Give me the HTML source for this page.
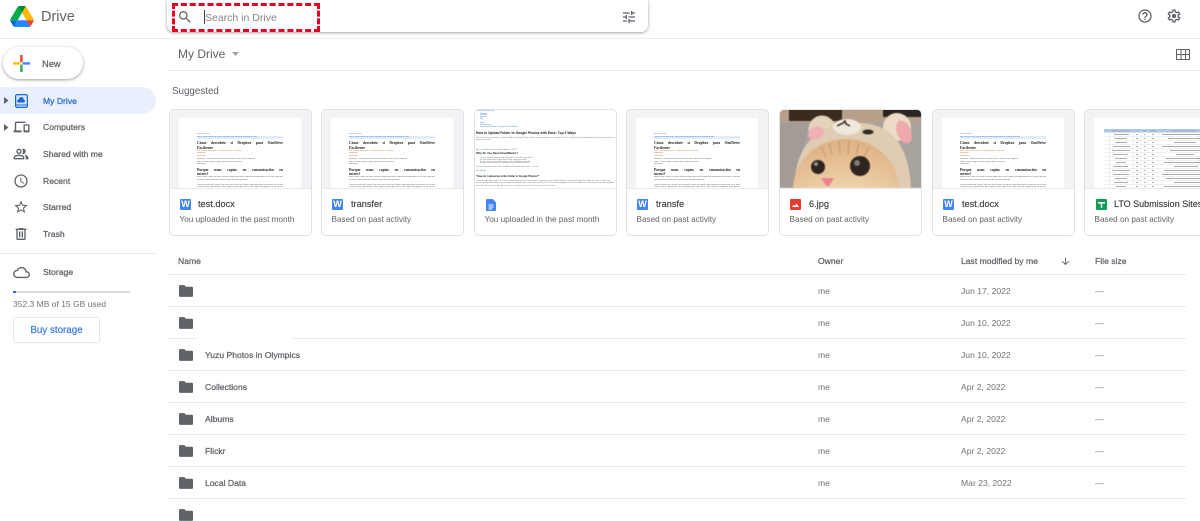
<!DOCTYPE html>
<html lang="en"><head><meta charset="utf-8"><title>My Drive - Google Drive</title>
<style>
html,body{margin:0;padding:0;background:#fff}
body{width:1200px;height:511px;position:relative;overflow:hidden;font-family:"Liberation Sans",sans-serif;color:#5f6368;font-size:9px;filter:blur(.25px)}
.a{position:absolute;white-space:nowrap}
svg{position:absolute;display:block}
.hl{position:absolute;height:1px;background:#e8eaed}
.nav{position:absolute;left:43px;font-size:8.6px;line-height:12px;color:#5f6368;-webkit-text-stroke:.25px #5f6368;white-space:nowrap}
.card{position:absolute;top:109px;width:141px;height:125px;border:1px solid #dfe1e5;border-radius:5px;background:#f1f3f4;overflow:hidden}
.info{position:absolute;left:0;right:0;top:78px;bottom:0;background:#fff;border-top:1px solid #e8eaed}
.fn{position:absolute;left:29px;top:9px;font-size:9.2px;line-height:13px;color:#3c4043;-webkit-text-stroke:.15px #3c4043;white-space:nowrap}
.sub{position:absolute;left:9.5px;top:25px;font-size:8.2px;line-height:12px;color:#5f6368;white-space:nowrap}
.ic{position:absolute;left:10px;top:10px;width:11px;height:11px;border-radius:1px;background:#4285f4;color:#fff;font-size:9px;line-height:11px;text-align:center;font-weight:bold}
.sheet{position:absolute;left:9px;top:8px;width:122px;height:71px;background:#fff;overflow:hidden;filter:blur(.2px)}
.sheet div{position:absolute;left:18px;width:86px;white-space:nowrap;overflow:hidden}
.t{font:2.1px/3px "Liberation Sans",sans-serif;color:#666}
.sheet div.h{font:bold 3.7px/4.5px "Liberation Serif",serif;color:#222;white-space:normal;text-align:justify;text-align-last:justify;height:4.5px}
.sheet div.h2{font:bold 3.7px/4.5px "Liberation Serif",serif;color:#222}
.o{font:2.1px/3px "Liberation Sans",sans-serif;color:#d5733b}
.fld{position:absolute;left:179px;width:14px;height:12px}
.nm{position:absolute;left:205px;font-size:8.6px;line-height:12px;color:#5f6368;-webkit-text-stroke:.25px #5f6368;white-space:nowrap}
.ow{position:absolute;left:818px;font-size:8.6px;line-height:12px;color:#6f7378}
.dt{position:absolute;left:961px;font-size:8.6px;line-height:12px;color:#6f7378}
.sz{position:absolute;left:1095px;font-size:9px;line-height:12px;color:#80868b}
.th{position:absolute;top:255px;font-size:8.6px;line-height:12px;color:#5f6368;-webkit-text-stroke:.25px #5f6368;white-space:nowrap}
</style></head><body>

<!-- Logo -->
<svg style="left:10px;top:6px" width="24" height="21" viewBox="0 0 87.3 78"><path d="m6.6 66.85 3.85 6.65c.8 1.4 1.95 2.5 3.3 3.3l13.75-23.8h-27.5c0 1.55.4 3.1 1.2 4.5z" fill="#0066da"/><path d="m43.65 25-13.75-23.8c-1.35.8-2.5 1.9-3.3 3.3l-25.4 44a9.06 9.06 0 0 0 -1.2 4.5h27.5z" fill="#00ac47"/><path d="m73.55 76.8c1.35-.8 2.5-1.9 3.3-3.3l1.6-2.75 7.65-13.25c.8-1.4 1.2-2.95 1.2-4.5h-27.502l5.852 11.5z" fill="#ea4335"/><path d="m43.65 25 13.75-23.8c-1.35-.8-2.9-1.2-4.5-1.2h-18.5c-1.6 0-3.15.45-4.5 1.2z" fill="#00832d"/><path d="m59.8 53h-32.3l-13.75 23.8c1.35.8 2.9 1.2 4.5 1.2h50.8c1.6 0 3.15-.45 4.5-1.2z" fill="#2684fc"/><path d="m73.4 26.5-12.7-22c-.8-1.4-1.95-2.5-3.3-3.3l-13.75 23.8 16.15 28h27.45c0-1.55-.4-3.1-1.2-4.5z" fill="#ffba00"/></svg>
<div class="a" style="left:41px;top:8px;font-size:14.5px;line-height:18px;color:#5f6368">Drive</div>

<!-- Search -->
<div class="a" style="left:167px;top:0;width:481px;height:32px;background:#fff;border-radius:0 0 7px 7px;box-shadow:0 1px 2px rgba(60,64,67,.3),0 1px 3px 1px rgba(60,64,67,.15)"></div>
<svg style="left:177px;top:9px" width="16" height="16" viewBox="0 0 24 24" fill="#5f6368"><path d="M15.5 14h-.79l-.28-.27A6.471 6.471 0 0 0 16 9.5 6.5 6.5 0 1 0 9.5 16c1.61 0 3.09-.59 4.23-1.57l.27.28v.79l5 4.99L20.49 19l-4.99-5zm-6 0C7.01 14 5 11.99 5 9.5S7.01 5 9.5 5 14 7.01 14 9.5 11.99 14 9.5 14z"/></svg>
<div class="a" style="left:204px;top:10px;width:1px;height:14px;background:#3c4043"></div>
<div class="a" style="left:205px;top:11px;font-size:10.5px;line-height:14px;color:#80868b">Search in Drive</div>
<svg style="left:621px;top:9px" width="16" height="16" viewBox="0 0 24 24" fill="#5f6368"><path d="M3 17v2h6v-2H3zM3 5v2h10V5H3zm10 16v-2h8v-2h-8v-2h-2v6h2zM7 9v2H3v2h4v2h2V9H7zm14 4v-2H11v2h10zm-6-4h2V7h4V5h-4V3h-2v6z"/></svg>
<div class="a" style="left:172px;top:3px;width:142px;height:23px;border:3px dashed #e60023"></div>

<svg style="left:1137px;top:8px" width="16" height="16" viewBox="0 0 24 24" fill="#5f6368"><path d="M11 18h2v-2h-2v2zm1-16C6.48 2 2 6.48 2 12s4.48 10 10 10 10-4.48 10-10S17.52 2 12 2zm0 18c-4.41 0-8-3.59-8-8s3.59-8 8-8 8 3.59 8 8-3.59 8-8 8zm0-14c-2.21 0-4 1.79-4 4h2c0-1.1.9-2 2-2s2 .9 2 2c0 2-3 1.75-3 5h2c0-2.25 3-2.5 3-5 0-2.21-1.79-4-4-4z"/></svg>
<svg style="left:1166px;top:8px" width="16" height="16" viewBox="0 0 24 24" fill="#5f6368"><path d="M19.43 12.98c.04-.32.07-.64.07-.98 0-.34-.03-.66-.07-.98l2.11-1.65c.19-.15.24-.42.12-.64l-2-3.46c-.09-.16-.26-.25-.44-.25-.06 0-.12.01-.17.03l-2.49 1c-.52-.4-1.08-.73-1.69-.98l-.38-2.65C14.46 2.18 14.25 2 14 2h-4c-.25 0-.46.18-.49.42l-.38 2.65c-.61.25-1.17.59-1.69.98l-2.49-1c-.06-.02-.12-.03-.18-.03-.17 0-.34.09-.43.25l-2 3.46c-.13.22-.07.49.12.64l2.11 1.65c-.04.32-.07.65-.07.98 0 .33.03.66.07.98l-2.11 1.65c-.19.15-.24.42-.12.64l2 3.46c.09.16.26.25.44.25.06 0 .12-.01.17-.03l2.49-1c.52.4 1.08.73 1.69.98l.38 2.65c.03.24.24.42.49.42h4c.25 0 .46-.18.49-.42l.38-2.65c.61-.25 1.17-.59 1.69-.98l2.49 1c.06.02.12.03.18.03.17 0 .34-.09.43-.25l2-3.46c.12-.22.07-.49-.12-.64l-2.11-1.65zm-1.98-1.71c.04.31.05.52.05.73 0 .21-.02.43-.05.73l-.14 1.13.89.7 1.08.84-.7 1.21-1.27-.51-1.04-.42-.9.68c-.43.32-.84.56-1.25.73l-1.06.43-.16 1.13-.2 1.35h-1.4l-.19-1.35-.16-1.13-1.06-.43c-.43-.18-.83-.41-1.23-.71l-.91-.7-1.06.43-1.27.51-.7-1.21 1.08-.84.89-.7-.14-1.13c-.03-.31-.05-.54-.05-.74s.02-.43.05-.73l.14-1.13-.89-.7-1.08-.84.7-1.21 1.27.51 1.04.42.9-.68c.43-.32.84-.56 1.25-.73l1.06-.43.16-1.13.2-1.35h1.39l.19 1.35.16 1.13 1.06.43c.43.18.83.41 1.23.71l.91.7 1.06-.43 1.27-.51.7 1.21-1.07.85-.89.7.14 1.13z"/><circle cx="12" cy="12" r="3.2"/></svg>

<div class="hl" style="left:0;top:38px;width:1200px"></div>

<!-- Sidebar -->
<div class="a" style="left:3px;top:47px;width:80px;height:32px;border-radius:16px;background:#fff;box-shadow:0 1px 2px rgba(60,64,67,.3),0 1px 3px 1px rgba(60,64,67,.15)"></div>
<svg style="left:13px;top:55px" width="17" height="17" viewBox="0 0 17 17"><path d="M9.6 0H7.200v7.200h2.400z" fill="#ea4335"/><path d="M9.600 9.600H7.200V17h2.400z" fill="#34a853"/><path d="M0 7.200h7.200v2.400H0z" fill="#fbbc04"/><path d="M9.600 7.200H17v2.400H9.600z" fill="#4285f4"/></svg>
<div class="a" style="left:42px;top:58px;font-size:9.300px;line-height:12px;color:#5f6368;-webkit-text-stroke:.25px #5f6368">New</div>

<div class="a" style="left:0;top:87px;width:156px;height:27px;background:#e8f0fe;border-radius:0 14px 14px 0"></div>
<svg style="left:4px;top:97px" width="5" height="7" viewBox="0 0 5 7"><path d="M0 0l4.500 3.500L0 7z" fill="#5f6368"/></svg>
<svg style="left:15px;top:94px" width="13" height="14" viewBox="0 0 13 14"><rect x=".6" y=".6" width="11.800" height="12.800" rx="1.500" fill="#d6e4fb" stroke="#1967d2" stroke-width="1.200"/><rect x="1" y="10.500" width="11" height="1" fill="#1967d2"/><path d="M3.500 8.500a1.500 1.500 0 0 1 .3-3 2.500 2.500 0 0 1 5 .3 1.400 1.400 0 0 1 .2 2.700z" fill="#1967d2"/></svg>
<div class="nav" style="top:95px;color:#2f6bd0;-webkit-text-stroke:.3px #2f6bd0">My Drive</div>

<svg style="left:4px;top:124px" width="5" height="7" viewBox="0 0 5 7"><path d="M0 0l4.500 3.500L0 7z" fill="#5f6368"/></svg>
<svg style="left:13px;top:119px" width="17" height="16" viewBox="0 0 24 24" fill="#5f6368"><path d="M4 6h14V4H4c-1.100 0-2 .900-2 2v11H0v3h12v-3H4V6zm19 2h-7c-.6 0-1 .400-1 1v10c0 .600.400 1 1 1h7c.600 0 1-.400 1-1V9c0-.600-.400-1-1-1zm-1 9h-5v-7h5v7z"/></svg>
<div class="nav" style="top:121px">Computers</div>

<svg style="left:13px;top:146px" width="16" height="16" viewBox="0 0 24 24" fill="#5f6368"><path d="M16.670 13.130C18.040 14.060 19 15.320 19 17v3h4v-3c0-2.180-3.570-3.470-6.330-3.870zM15 12c2.210 0 4-1.790 4-4s-1.790-4-4-4c-.47 0-.91.100-1.330.240a5.980 5.980 0 0 1 0 7.520c.42.140.86.240 1.330.240zM9 12c2.210 0 4-1.790 4-4s-1.790-4-4-4-4 1.790-4 4 1.790 4 4 4zm0-6c1.100 0 2 .900 2 2s-.900 2-2 2-2-.900-2-2 .900-2 2-2zm0 7c-2.670 0-8 1.340-8 4v3h16v-3c0-2.660-5.330-4-8-4zm6 5H3v-.990C3.200 16.290 6.300 15 9 15s5.800 1.290 6 2v1z"/></svg>
<div class="nav" style="top:148px">Shared with me</div>

<svg style="left:13px;top:173px" width="16" height="16" viewBox="0 0 24 24" fill="#5f6368"><path d="M11.990 2C6.470 2 2 6.480 2 12s4.470 10 9.990 10C17.520 22 22 17.520 22 12S17.520 2 11.990 2zM12 20c-4.420 0-8-3.580-8-8s3.580-8 8-8 8 3.580 8 8-3.580 8-8 8zm.5-13H11v6l5.250 3.150.75-1.230-4.500-2.670z"/></svg>
<div class="nav" style="top:175px">Recent</div>

<svg style="left:13px;top:199px" width="16" height="16" viewBox="0 0 24 24" fill="#5f6368"><path d="M22 9.240l-7.190-.620L12 2 9.190 8.630 2 9.240l5.460 4.730L5.820 21 12 17.270 18.180 21l-1.630-7.030L22 9.240zM12 15.400l-3.760 2.270 1-4.280-3.320-2.880 4.380-.380L12 6.100l1.710 4.040 4.380.380-3.320 2.880 1 4.280L12 15.400z"/></svg>
<div class="nav" style="top:201px">Starred</div>

<svg style="left:13px;top:226px" width="16" height="16" viewBox="0 0 24 24" fill="#5f6368"><path d="M15 4V3H9v1H4v2h1v13c0 1.100.900 2 2 2h10c1.100 0 2-.900 2-2V6h1V4h-5zm2 15H7V6h10v13zM9 8h2v9H9zm4 0h2v9h-2z"/></svg>
<div class="nav" style="top:228px">Trash</div>

<div class="hl" style="left:0;top:253px;width:156px"></div>
<svg style="left:13px;top:264px" width="17" height="17" viewBox="0 0 24 24" fill="#5f6368"><path d="M19.350 10.040A7.490 7.490 0 0 0 12 4C9.110 4 6.600 5.640 5.350 8.040A5.994 5.994 0 0 0 0 14c0 3.310 2.690 6 6 6h13c2.760 0 5-2.240 5-5 0-2.640-2.050-4.780-4.650-4.960zM19 18H6c-2.210 0-4-1.790-4-4 0-2.050 1.530-3.760 3.560-3.970l1.070-.110.500-.950A5.469 5.469 0 0 1 12 6c2.620 0 4.880 1.860 5.390 4.430l.300 1.500 1.530.110A2.980 2.980 0 0 1 22 15c0 1.650-1.350 3-3 3z"/></svg>
<div class="nav" style="top:266px">Storage</div>
<div class="a" style="left:14px;top:291px;width:116px;height:2px;background:#dadce0"></div>
<div class="a" style="left:13px;top:291px;width:3px;height:2px;background:#1a73e8"></div>
<div class="a" style="left:13px;top:298px;font-size:8.500px;line-height:12px;color:#70757a">352.3 MB of 15 GB used</div>
<div class="a" style="left:13px;top:317px;width:85px;height:24px;border:1px solid #e3e5e8;border-radius:3px;text-align:center;font-size:9.800px;line-height:25px;color:#3b78e0;-webkit-text-stroke:.2px #3b78e0">Buy storage</div>

<!-- Toolbar -->
<div class="a" style="left:178px;top:46px;font-size:12px;line-height:17px;color:#5f6368">My Drive</div>
<svg style="left:232px;top:52px" width="7" height="4" viewBox="0 0 7 4"><path d="M0 0h7L3.500 4z" fill="#9aa0a6"/></svg>
<svg style="left:1176px;top:49px" width="14" height="11" viewBox="0 0 14 11" fill="none" stroke="#5f6368"><rect x=".5" y=".5" width="13" height="10"/><path d="M5 1v9M9.500 1v9M1 5.500h12"/></svg>
<div class="hl" style="left:167px;top:70px;width:1033px"></div>
<div class="a" style="left:172px;top:85px;font-size:9.800px;line-height:13px;color:#5f6368">Suggested</div>

<!-- Card 1 -->
<div class="card" style="left:169px">
<div class="sheet">
<div class="t" style="top:14.500px;color:#888">Article details</div>
<div class="t" style="top:17.500px;color:#4a7fd0;background:#e3ecfa">https://www.ubackup.com/cloud-backup/onedrive-to-dropbox.html</div>
<div class="h" style="top:23px">Cómo descubrir si Dropbox para OneDrive</div>
<div class="h2" style="top:27.500px">Facilcente</div>
<div class="o" style="top:31.500px">Link: Cómo descubrir si Dropbox para OneDrive</div>
<div class="o" style="top:34px">Etiquetas</div>
<div class="o" style="top:36.500px">Keywords</div>
<div class="t" style="top:39.500px">Mensaje: Transferencia de archivos entre OneDrive y Dropbox</div>
<div class="t" style="top:42.500px">Nota: Cómo elegir la mejor opción para transferir</div>
<div class="t" style="top:45px">Resumen</div>
<div class="h" style="top:50px">Porque usan copias en comunicación en</div>
<div class="h2" style="top:54px">meros?</div>
<div class="t" style="top:57.500px">Hoy en día, cada vez más usuarios optan por hacer copias de seguridad en la nube y transferir</div>
<div class="t" style="top:60.500px">archivos entre diferentes servicios de almacenamiento.</div>
<div class="t" style="top:65.500px">Como sistema de correo, con frecuencia tiene una gran capacidad para almacenar en la nube</div>
<div class="t" style="top:68px">archivos muy importantes. Esto significa que debe hacer una copia de seguridad y conservar</div>
</div>
<div class="info"><div class="ic">W</div><div class="fn" style="left:28px">test.docx</div><div class="sub">You uploaded in the past month</div></div>
</div>

<!-- Card 2 -->
<div class="card" style="left:321px">
<div class="sheet">
<div class="t" style="top:14.500px;color:#888">Article details</div>
<div class="t" style="top:17.500px;color:#4a7fd0;background:#e3ecfa">https://www.ubackup.com/cloud-backup/onedrive-to-dropbox.html</div>
<div class="h" style="top:23px">Cómo descubrir si Dropbox para OneDrive</div>
<div class="h2" style="top:27.500px">Facilcente</div>
<div class="o" style="top:31.500px">Link: Cómo descubrir si Dropbox para OneDrive</div>
<div class="o" style="top:34px">Etiquetas</div>
<div class="o" style="top:36.500px">Keywords</div>
<div class="t" style="top:39.500px">Mensaje: Transferencia de archivos entre OneDrive y Dropbox</div>
<div class="t" style="top:42.500px">Nota: Cómo elegir la mejor opción para transferir</div>
<div class="t" style="top:45px">Resumen</div>
<div class="h" style="top:50px">Porque usan copias en comunicación en</div>
<div class="h2" style="top:54px">meros?</div>
<div class="t" style="top:57.500px">Hoy en día, cada vez más usuarios optan por hacer copias de seguridad en la nube y transferir</div>
<div class="t" style="top:60.500px">archivos entre diferentes servicios de almacenamiento.</div>
<div class="t" style="top:65.500px">Como sistema de correo, con frecuencia tiene una gran capacidad para almacenar en la nube</div>
<div class="t" style="top:68px">archivos muy importantes. Esto significa que debe hacer una copia de seguridad y conservar</div>
</div>
<div class="info"><div class="ic">W</div><div class="fn">transfer</div><div class="sub">Based on past activity</div></div>
</div>

<!-- Card 3 -->
<div class="card" style="left:474px;background:#fff">
<div class="a" style="left:0;top:0;width:141px;height:78px;overflow:hidden;filter:blur(.2px)">
<div class="a" style="left:1px;top:0;font:1.900px/2.500px 'Liberation Sans',sans-serif;color:#4a7fd0">Windows Backup info</div>
<div class="a" style="left:5px;top:3.500px;font:1.700px/1.900px 'Liberation Sans',sans-serif;color:#4a7fd0">Summary<br>Overview<br>Methods<br>FAQ<br><br>Guide<br>Related articles<br>How to Upload Folder to Google Photos with Ease</div>
<div class="a" style="left:1px;top:20.700px;font:bold 3.350px/4px 'Liberation Sans',sans-serif;color:#222">How to Upload Folder to Google Photos with Ease: Top 3 Ways</div>
<div class="a" style="left:1px;top:26.500px;font:1.900px/2.400px 'Liberation Sans',sans-serif;color:#777">This article shows you how to upload a folder to Google Photos. Three practical methods are covered in detail. Google Photos provides plenty of features and you can easily<br>upload any folder.</div>
<div class="a" style="left:1px;top:38.500px;font:1.900px/3px 'Liberation Sans',sans-serif;color:#777">By <span style="color:#4a7fd0">Lucy / Updated</span> Last Updated August 5, 2022</div>
<div class="a" style="left:1px;top:42px;font:bold 2.750px/4px 'Liberation Sans',sans-serif;color:#222">Why Do You Need CloudBacko?</div>
<div class="a" style="left:5px;top:48px;font:1.900px/1.800px 'Liberation Sans',sans-serif;color:#777">Do you need to automatically upload to the cloud for your files?<br>Do you need to back up to other cloud storage services?<br>Do you want to sync data between two cloud drives quickly?<br>Do you need one place to manage all your cloud accounts?</div>
<div class="a" style="left:1px;top:56.200px;font:1.900px/3px 'Liberation Sans',sans-serif;color:#777">Get one of your accounts with CloudBacko Cloud Backup service - it's free.</div>
<div class="a" style="left:1px;top:60.200px;font:1.900px/3px 'Liberation Sans',sans-serif;color:#4a7fd0">Get Started</div>
<div class="a" style="left:1px;top:64.500px;font:bold 2.500px/4px 'Liberation Sans',sans-serif;color:#222">"How do I upload an entire folder to Google Photos?"</div>
<div class="a" style="left:1px;top:70px;width:138px;white-space:normal;font:1.950px/2.300px 'Liberation Sans',sans-serif;color:#777">I have multiple folders on my PC that contain many pictures and I want to upload them to Google Photos in a way that keeps the folder structure. Is there any way to upload entire folders at once without having to select each photo one by one? I have tried dragging them to the website but only the pictures get uploaded and it all ends up in one big album with no structure kept at all, which is not what I want here.</div>
</div>
<div class="info">
<svg style="left:11px;top:10px" width="10" height="12" viewBox="0 0 10 12"><path d="M1 0h5.500L10 3.500V11a1 1 0 0 1-1 1H1a1 1 0 0 1-1-1V1a1 1 0 0 1 1-1z" fill="#4285f4"/><path d="M2.500 5.500h5v1h-5zM2.500 7.500h5v1h-5zM2.500 9.500h3.500v1H2.500z" fill="#fff"/></svg>
<div class="sub">You uploaded in the past month</div></div>
</div>

<!-- Card 4 -->
<div class="card" style="left:626px">
<div class="sheet">
<div class="t" style="top:14.500px;color:#888">Article details</div>
<div class="t" style="top:17.500px;color:#4a7fd0;background:#e3ecfa">https://www.ubackup.com/cloud-backup/onedrive-to-dropbox.html</div>
<div class="h" style="top:23px">Cómo descubrir si Dropbox para OneDrive</div>
<div class="h2" style="top:27.500px">Facilcente</div>
<div class="o" style="top:31.500px">Link: Cómo descubrir si Dropbox para OneDrive</div>
<div class="o" style="top:34px">Etiquetas</div>
<div class="o" style="top:36.500px">Keywords</div>
<div class="t" style="top:39.500px">Mensaje: Transferencia de archivos entre OneDrive y Dropbox</div>
<div class="t" style="top:42.500px">Nota: Cómo elegir la mejor opción para transferir</div>
<div class="t" style="top:45px">Resumen</div>
<div class="h" style="top:50px">Porque usan copias en comunicación en</div>
<div class="h2" style="top:54px">meros?</div>
<div class="t" style="top:57.500px">Hoy en día, cada vez más usuarios optan por hacer copias de seguridad en la nube y transferir</div>
<div class="t" style="top:60.500px">archivos entre diferentes servicios de almacenamiento.</div>
<div class="t" style="top:65.500px">Como sistema de correo, con frecuencia tiene una gran capacidad para almacenar en la nube</div>
<div class="t" style="top:68px">archivos muy importantes. Esto significa que debe hacer una copia de seguridad y conservar</div>
</div>
<div class="info"><div class="ic">W</div><div class="fn">transfe</div><div class="sub">Based on past activity</div></div>
</div>

<!-- Card 5 cat -->
<div class="card" style="left:779px;border-color:#e3e4e6">
<svg style="left:-1px;top:-1px;filter:blur(.6px)" width="143" height="79" viewBox="0 0 143 79">
<defs>
<radialGradient id="f" cx=".5" cy="1" r="1"><stop offset="0" stop-color="#f6e7d2"/><stop offset=".5" stop-color="#efd3ac"/><stop offset="1" stop-color="#deb183"/></radialGradient>
</defs>
<rect width="143" height="79" fill="#a8a39d"/>
<rect width="143" height="13" fill="#b79f89"/>
<rect x="10" y="0" width="53" height="12" fill="#3a2a20"/>
<rect x="104" y="0" width="39" height="8" fill="#2b2320"/>
<path d="M0 15 Q12 12 30 14 L16 79 H0z" fill="#a29c95"/>
<circle cx="43" cy="20" r="13.500" fill="#e6d3bb"/>
<circle cx="118" cy="18" r="14" fill="#ecdcc6"/>
<path d="M15 79 C17 44 28 18 74 14 C112 12 130 36 132 79z" fill="#e0ccb2"/>
<ellipse cx="37" cy="24" rx="8.500" ry="6" fill="#eeb0b5" transform="rotate(-25 37 24)"/>
<ellipse cx="125" cy="23" rx="7" ry="12" fill="#eda9ac" transform="rotate(-22 125 23)"/>
<ellipse cx="68" cy="18" rx="14" ry="8" fill="#efe8dc"/>
<path d="M58 17l6-3 2-2 1 3 4 2" fill="none" stroke="#2c2622" stroke-width="1.500"/>
<ellipse cx="89" cy="23" rx="5.500" ry="2.500" fill="#2f2a26"/>
<ellipse cx="67" cy="80" rx="53" ry="50" fill="url(#f)"/>
<path d="M50 34l3 12M60 32l1 14M70 32l-1 14M80 34l-3 12M42 38l5 10M90 38l-5 10" stroke="#c99a68" stroke-width="1.600" fill="none" opacity=".7"/>
<circle cx="39" cy="58" r="7" fill="#2e2520"/>
<circle cx="81" cy="57" r="10" fill="#2e2520"/>
<circle cx="37" cy="55" r="2" fill="#8c8f90"/>
<circle cx="78" cy="54" r="3" fill="#7e7a75"/>
<path d="M42 69h13l-5 8h-3z" fill="#e8838f"/>
</svg>
<div class="info">
<svg style="left:10px;top:10px" width="11" height="11" viewBox="0 0 11 11"><rect width="11" height="11" rx="1" fill="#ea3a2f"/><path d="M2 8l1.700-2.500L5 7l1.500-2.500L9 8z" fill="#fff"/></svg>
<div class="fn">6.jpg</div><div class="sub">Based on past activity</div></div>
</div>

<!-- Card 6 -->
<div class="card" style="left:932px">
<div class="sheet">
<div class="t" style="top:14.500px;color:#888">Article details</div>
<div class="t" style="top:17.500px;color:#4a7fd0;background:#e3ecfa">https://www.ubackup.com/cloud-backup/onedrive-to-dropbox.html</div>
<div class="h" style="top:23px">Cómo descubrir si Dropbox para OneDrive</div>
<div class="h2" style="top:27.500px">Facilcente</div>
<div class="o" style="top:31.500px">Link: Cómo descubrir si Dropbox para OneDrive</div>
<div class="o" style="top:34px">Etiquetas</div>
<div class="o" style="top:36.500px">Keywords</div>
<div class="t" style="top:39.500px">Mensaje: Transferencia de archivos entre OneDrive y Dropbox</div>
<div class="t" style="top:42.500px">Nota: Cómo elegir la mejor opción para transferir</div>
<div class="t" style="top:45px">Resumen</div>
<div class="h" style="top:50px">Porque usan copias en comunicación en</div>
<div class="h2" style="top:54px">meros?</div>
<div class="t" style="top:57.500px">Hoy en día, cada vez más usuarios optan por hacer copias de seguridad en la nube y transferir</div>
<div class="t" style="top:60.500px">archivos entre diferentes servicios de almacenamiento.</div>
<div class="t" style="top:65.500px">Como sistema de correo, con frecuencia tiene una gran capacidad para almacenar en la nube</div>
<div class="t" style="top:68px">archivos muy importantes. Esto significa que debe hacer una copia de seguridad y conservar</div>
</div>
<div class="info"><div class="ic">W</div><div class="fn">test.docx</div><div class="sub">Based on past activity</div></div>
</div>

<!-- Card 7 -->
<div class="card" style="left:1084px;width:140px">
<div class="sheet" style="width:131px">
<svg style="left:10px;top:11px;filter:blur(.35px)" width="121" height="60" viewBox="0 0 121 60">
<rect width="121" height="3.500" fill="#a9c7ea"/>
<g stroke="#e0e2e5" stroke-width=".5"><path d="M0 3.500h121M0 7.500h121M0 11.500h121M0 15.500h121M0 19.500h121M0 23.500h121M0 27.500h121M0 31.500h121M0 35.500h121M0 39.500h121M0 43.500h121M0 47.500h121M0 51.500h121M0 55.500h121M0 59.500h121M5.500 0v60M29 0v60M37 0v60M44 0v60M54 0v60"/></g>
<g stroke="#a9adb1" stroke-width=".9"><path d="M8 2h18M39 2h3M46 2h6M68 2h24"/>
<path d="M10 5.500h15M10 9.500h13M11 13.500h12M9 17.500h17M8 21.500h18M9 25.500h15M11 29.500h12M12 33.500h10M9 37.500h15M8 41.500h18M9 45.500h16M11 49.500h12M10 53.500h14M12 57.500h10"/>
<path d="M32 5.500h2M32 9.500h2M32 13.500h2M32 17.500h2M32 21.500h2M32 25.500h2M32 29.500h2M32 33.500h2M32 37.500h2M32 41.500h2M32 45.500h2M32 49.500h2M32 53.500h2M32 57.500h2M40 5.500h1.500M40 9.500h1.500M40 13.500h1.500M40 17.500h1.500M40 21.500h1.500M40 25.500h1.500M40 29.500h1.500M40 33.500h1.500M40 37.500h1.500M40 41.500h1.500M40 45.500h1.500M40 49.500h1.500M40 53.500h1.500M40 57.500h1.500M48 5.500h2M48 9.500h2M48 13.500h2M48 17.500h2M48 21.500h2M48 25.500h2M48 29.500h2M48 33.500h2M48 37.500h2M48 41.500h2M48 45.500h2M48 49.500h2M48 53.500h2M48 57.500h2"/>
<path d="M58 5.500h63M64 9.500h42M70 13.500h22M58 17.500h63M66 21.500h38M72 25.500h18M62 29.500h56M60 33.500h58M70 37.500h24M60 41.500h60M58 45.500h62M62 49.500h54M70 53.500h26M60 57.500h60"/></g>
</svg>
</div>
<div class="info">
<svg style="left:11px;top:10px" width="11" height="11" viewBox="0 0 11 11"><rect width="11" height="11" rx="1" fill="#0f9d58"/><path d="M2 3h7v1.500H6.200V9H4.800V4.500H2z" fill="#fff"/></svg>
<div class="fn" style="font-size:9px">LTO Submission Sites</div><div class="sub">Based on past activity</div></div>
</div>

<!-- List header -->
<div class="th" style="left:178px">Name</div>
<div class="th" style="left:818px">Owner</div>
<div class="th" style="left:961px">Last modified by me</div>
<svg style="left:1060px;top:256px" width="11" height="11" viewBox="0 0 24 24" fill="#5f6368"><path d="M20 12l-1.410-1.410L13 16.170V4h-2v12.170l-5.580-5.590L4 12l8 8 8-8z"/></svg>
<div class="th" style="left:1095px">File size</div>
<div class="hl" style="left:167px;top:274px;width:1019px"></div>

<!-- Rows -->
<svg class="fld" style="top:285px" viewBox="0 0 13 11"><path d="M1 0h4l1.500 1.500H12a1 1 0 0 1 1 1V10a1 1 0 0 1-1 1H1a1 1 0 0 1-1-1V1a1 1 0 0 1 1-1z" fill="#5f6368"/></svg>
<div class="ow" style="top:285px">me</div><div class="dt" style="top:285px">Jun 17, 2022</div><div class="sz" style="top:285px">—</div>
<div class="hl" style="left:167px;top:306px;width:1019px"></div>

<svg class="fld" style="top:317px" viewBox="0 0 13 11"><path d="M1 0h4l1.500 1.500H12a1 1 0 0 1 1 1V10a1 1 0 0 1-1 1H1a1 1 0 0 1-1-1V1a1 1 0 0 1 1-1z" fill="#5f6368"/></svg>
<div class="ow" style="top:317px">me</div><div class="dt" style="top:317px">Jun 10, 2022</div><div class="sz" style="top:317px">—</div>
<div class="hl" style="left:167px;top:338px;width:31px"></div>
<div class="hl" style="left:293px;top:338px;width:893px"></div>

<svg class="fld" style="top:349px" viewBox="0 0 13 11"><path d="M1 0h4l1.500 1.500H12a1 1 0 0 1 1 1V10a1 1 0 0 1-1 1H1a1 1 0 0 1-1-1V1a1 1 0 0 1 1-1z" fill="#5f6368"/></svg>
<div class="nm" style="top:349px">Yuzu Photos in Olympics</div>
<div class="ow" style="top:349px">me</div><div class="dt" style="top:349px">Jun 10, 2022</div><div class="sz" style="top:349px">—</div>
<div class="hl" style="left:167px;top:370px;width:1019px"></div>

<svg class="fld" style="top:381px" viewBox="0 0 13 11"><path d="M1 0h4l1.500 1.500H12a1 1 0 0 1 1 1V10a1 1 0 0 1-1 1H1a1 1 0 0 1-1-1V1a1 1 0 0 1 1-1z" fill="#5f6368"/></svg>
<div class="nm" style="top:381px">Collections</div>
<div class="ow" style="top:381px">me</div><div class="dt" style="top:381px">Apr 2, 2022</div><div class="sz" style="top:381px">—</div>
<div class="hl" style="left:167px;top:402px;width:1019px"></div>

<svg class="fld" style="top:413px" viewBox="0 0 13 11"><path d="M1 0h4l1.500 1.500H12a1 1 0 0 1 1 1V10a1 1 0 0 1-1 1H1a1 1 0 0 1-1-1V1a1 1 0 0 1 1-1z" fill="#5f6368"/></svg>
<div class="nm" style="top:413px">Albums</div>
<div class="ow" style="top:413px">me</div><div class="dt" style="top:413px">Apr 2, 2022</div><div class="sz" style="top:413px">—</div>
<div class="hl" style="left:167px;top:434px;width:1019px"></div>

<svg class="fld" style="top:445px" viewBox="0 0 13 11"><path d="M1 0h4l1.500 1.500H12a1 1 0 0 1 1 1V10a1 1 0 0 1-1 1H1a1 1 0 0 1-1-1V1a1 1 0 0 1 1-1z" fill="#5f6368"/></svg>
<div class="nm" style="top:445px">Flickr</div>
<div class="ow" style="top:445px">me</div><div class="dt" style="top:445px">Apr 2, 2022</div><div class="sz" style="top:445px">—</div>
<div class="hl" style="left:167px;top:466px;width:1019px"></div>

<svg class="fld" style="top:477px" viewBox="0 0 13 11"><path d="M1 0h4l1.500 1.500H12a1 1 0 0 1 1 1V10a1 1 0 0 1-1 1H1a1 1 0 0 1-1-1V1a1 1 0 0 1 1-1z" fill="#5f6368"/></svg>
<div class="nm" style="top:477px">Local Data</div>
<div class="ow" style="top:477px">me</div><div class="dt" style="top:477px">Mar 23, 2022</div><div class="sz" style="top:477px">—</div>
<div class="hl" style="left:167px;top:498px;width:1019px"></div>

<svg class="fld" style="top:509px" viewBox="0 0 13 11"><path d="M1 0h4l1.500 1.500H12a1 1 0 0 1 1 1V10a1 1 0 0 1-1 1H1a1 1 0 0 1-1-1V1a1 1 0 0 1 1-1z" fill="#5f6368"/></svg>

</body></html>
